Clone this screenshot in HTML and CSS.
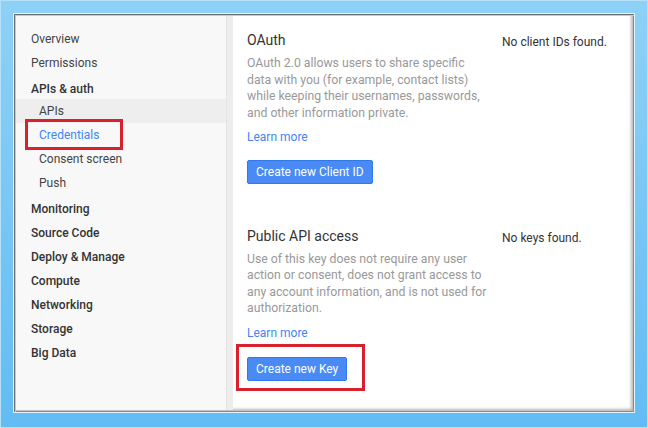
FILE: index.html
```html
<!DOCTYPE html>
<html lang="en">
<head>
  <meta charset="UTF-8">
  <title>Credentials</title>
  <link rel="stylesheet" href="styles.css">
</head>
<body>
  <div class="window">
    <div class="panel">
      <ul class="nav">
        <li class="nav-item">Overview</li>
        <li class="nav-item">Permissions</li>
        <li class="nav-item group head short">APIs &amp; auth</li>
        <li class="nav-item sub hover">APIs</li>
        <li class="nav-item sub active">Credentials<span class="mark mark-nav"></span></li>
        <li class="nav-item sub">Consent screen</li>
        <li class="nav-item sub">Push</li>
        <li class="nav-item group head">Monitoring</li>
        <li class="nav-item group">Source Code</li>
        <li class="nav-item group">Deploy &amp; Manage</li>
        <li class="nav-item group">Compute</li>
        <li class="nav-item group">Networking</li>
        <li class="nav-item group">Storage</li>
        <li class="nav-item group">Big Data</li>
      </ul>
      <div class="divider"></div>
      <div class="main">
        <section class="block">
          <div class="info">
            <h2>OAuth</h2>
            <p>OAuth 2.0 allows users to share specific data with you (for example, contact lists) while keeping their usernames, passwords, and other information private.</p>
            <a class="link" href="#">Learn more</a>
            <button class="btn">Create new Client ID</button>
          </div>
          <div class="status">No client IDs found.</div>
        </section>
        <section class="block second">
          <div class="info">
            <h2>Public API access</h2>
            <p>Use of this key does not require any user action or consent, does not grant access to any account information, and is not used for authorization.</p>
            <a class="link" href="#">Learn more</a>
            <div class="btn-wrap">
              <button class="btn">Create new Key</button>
              <span class="mark mark-btn"></span>
            </div>
          </div>
          <div class="status">No keys found.</div>
        </section>
      </div>
    </div>
  </div>
</body>
</html>
```

FILE: styles.css
```css
html, body {
  margin: 0;
  height: 100%;
}
body {
  background: linear-gradient(to bottom, #8ed1f6, #62bcf3);
  padding: 13px 13px 15px 13px;
  box-sizing: border-box;
  font-family: Roboto, "Liberation Sans", Arial, sans-serif;
  font-size: 12px;
  color: #333;
  box-shadow: inset 0 0 0 1px #b5e2fa;
}
.window {
  height: 100%;
  border: 1px solid #e2f3fd;
  box-sizing: border-box;
}
.panel {
  display: flex;
  height: 100%;
  background: #fff;
  box-shadow: inset 1px 1px 0 #6e6e6e, inset 2px 2px 0 #c9c9c9, inset -1px -1px 0 #8a8a8a, inset -3px -3px 3px #b8b8b8;
  padding: 2px;
  box-sizing: border-box;
}
.nav {
  list-style: none;
  margin: 0;
  padding: 11px 0 0 0;
  width: 210px;
  background: #f8f8f8;
}
.nav-item {
  position: relative;
  height: 24px;
  line-height: 24px;
  padding-left: 15px;
  color: #444;
}
.nav-item.group {
  font-weight: 500;
  color: #333;
}
.nav-item.head {
  margin-top: 2px;
}
.nav-item.short {
  height: 22px;
}
.nav-item.sub {
  padding-left: 23px;
}
.nav-item.hover {
  background: #eeeeee;
}
.nav-item.active {
  color: #4285f4;
}
.divider {
  width: 6px;
  background: #ededed;
  border-left: 1px solid #e4e4e4;
}
.main {
  flex: 1;
  padding: 14px 14px 0 14px;
}
.block {
  display: grid;
  grid-template-columns: 243px 1fr;
  column-gap: 12px;
}
.block.second {
  margin-top: 42px;
}
h2 {
  margin: 0;
  font-size: 14px;
  font-weight: 400;
  line-height: 20px;
  color: #333;
}
p {
  margin: 5px 0 0 0;
  color: #999;
  font-size: 12.25px;
  line-height: 16.5px;
}
.link {
  display: block;
  margin-top: 8px;
  line-height: 16.5px;
  color: #4285f4;
  text-decoration: none;
}
.btn {
  display: block;
  margin-top: 14px;
  height: 24px;
  padding: 0 8px;
  border: 1px solid #3079ed;
  border-radius: 2px;
  background: #4a8af4;
  color: #fff;
  font-family: inherit;
  font-size: 12px;
}
.btn-wrap {
  position: relative;
  margin-top: 16px;
}
.btn-wrap .btn {
  margin-top: 0;
}
.status {
  padding-top: 2px;
  line-height: 20px;
  color: #333;
}
.mark {
  position: absolute;
  border: 3px solid #d7222e;
}
.mark-nav {
  left: 9px;
  top: -4px;
  width: 92px;
  height: 25px;
}
.mark-btn {
  left: -11px;
  top: -13px;
  width: 123px;
  height: 41px;
}
```
